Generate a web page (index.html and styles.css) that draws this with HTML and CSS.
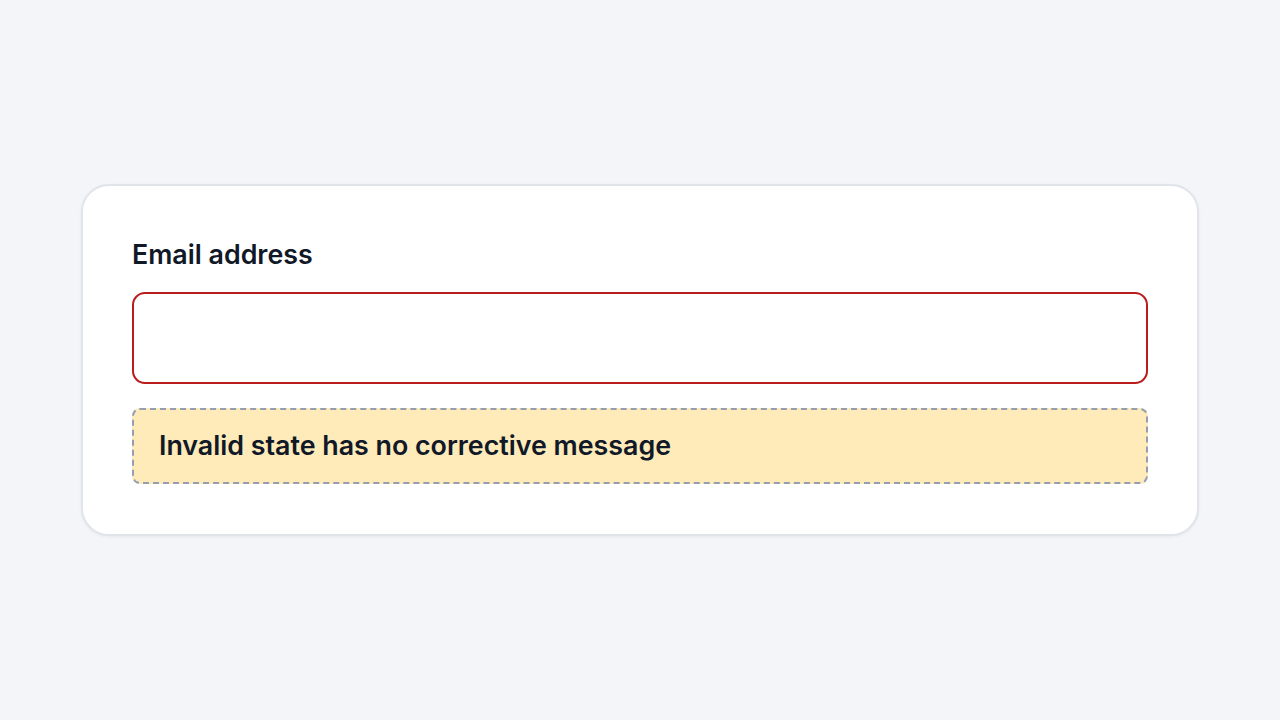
FILE: index.html
```html
<!DOCTYPE html>
<html lang="en">
<head>
<meta charset="utf-8">
<title>Email field</title>
<link rel="stylesheet" href="styles.css">
</head>
<body>
<main class="page">
  <section class="card">
    <label class="label" for="email">Email address</label>
    <input class="input input-invalid" id="email" type="email" aria-invalid="true">
    <div class="note">Invalid state has no corrective message</div>
  </section>
</main>
</body>
</html>
```
FILE: styles.css
```css
* { box-sizing: border-box; }
html, body { margin: 0; height: 100%; }
body {
  background: #f4f5f9;
  font-family: Inter, "Noto Sans", sans-serif;
  color: #111827;
}
.page {
  min-height: 100%;
  display: flex;
  align-items: center;
  justify-content: center;
  padding: 0 81px;
}
.card {
  width: 1118px;
  background: #ffffff;
  border: 2px solid #e1e4eb;
  border-radius: 28px;
  padding: 48px 49px 50px 49px;
  display: flex;
  flex-direction: column;
  box-shadow: 0 1px 3px rgba(15, 23, 42, 0.06);
}
.label {
  display: block;
  font-size: 26.8px;
  font-weight: 600;
  line-height: 40px;
  margin-bottom: 18px;
  color: #111827;
}
.input {
  display: block;
  width: 100%;
  height: 92px;
  margin: 0 0 24px 0;
  border: 2px solid #b91c1c;
  border-radius: 13px;
  background: #fff;
  padding: 0 24px;
  font: inherit;
  outline: none;
}
.note {
  height: 76px;
  display: flex;
  align-items: center;
  padding: 0 25px 3px 25px;
  background: #feebb9;
  border: 2px dashed #959db0;
  border-radius: 8px;
  font-size: 26.8px;
  font-weight: 600;
  color: #111827;
}
```
